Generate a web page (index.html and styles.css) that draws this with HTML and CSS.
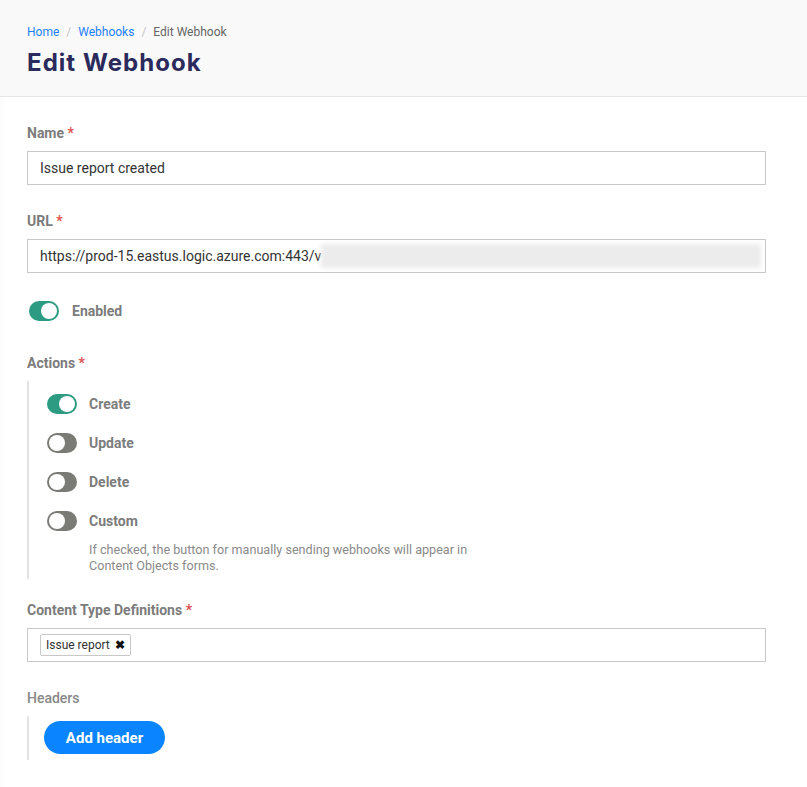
FILE: index.html
```html
<!DOCTYPE html>
<html>
<head>
<meta charset="utf-8">
<link rel="stylesheet" href="styles.css">
</head>
<body>
<header class="page-header">
  <nav class="breadcrumb">
    <a href="#">Home</a><span class="sep">/</span><a href="#">Webhooks</a><span class="sep">/</span><span class="current">Edit Webhook</span>
  </nav>
  <h1 class="title">Edit Webhook</h1>
</header>
<main class="content">
  <div class="form-group">
    <label class="label">Name <span class="req">*</span></label>
    <div class="field">Issue report created</div>
  </div>
  <div class="form-group">
    <label class="label">URL <span class="req">*</span></label>
    <div class="field url"><span>https://prod-15.eastus.logic.azure.com:443/v</span><span class="blurred"></span></div>
  </div>
  <div class="enabled-row">
    <span class="toggle on"></span><span class="toggle-label">Enabled</span>
  </div>
  <div class="form-group actions">
    <label class="label">Actions <span class="req">*</span></label>
    <div class="sub-group">
      <div class="toggle-row"><span class="toggle on"></span><span class="toggle-label">Create</span></div>
      <div class="toggle-row"><span class="toggle"></span><span class="toggle-label">Update</span></div>
      <div class="toggle-row"><span class="toggle"></span><span class="toggle-label">Delete</span></div>
      <div class="toggle-row"><span class="toggle"></span><span class="toggle-label">Custom</span></div>
      <p class="help">If checked, the button for manually sending webhooks will appear in<br>Content Objects forms.</p>
    </div>
  </div>
  <div class="form-group ctd">
    <label class="label">Content Type Definitions <span class="req">*</span></label>
    <div class="field tags"><span class="tag">Issue report <span class="x">✖</span></span></div>
  </div>
  <div class="form-group headers">
    <label class="label light">Headers</label>
    <div class="sub-group hdr">
      <button class="btn">Add header</button>
    </div>
  </div>
</main>
</body>
</html>
```

FILE: styles.css
```css
* { box-sizing: border-box; }
html, body { margin: 0; padding: 0; }
body {
  font-family: Roboto, "Liberation Sans", sans-serif;
  background: #fff;
  color: #333;
  min-height: 787px;
  box-shadow: inset 8px 0 8px -6px rgba(0,0,0,0.025);
}
.page-header {
  background: #f9f9f9;
  border-bottom: 1px solid #e6e6e6;
  height: 97px;
  padding: 24px 27px 0;
}
.breadcrumb {
  font-size: 12px;
  line-height: 16px;
  color: #666;
}
.breadcrumb a { color: #1e80ff; text-decoration: none; }
.breadcrumb .sep { color: #c4c4c4; margin: 0 7px; }
.breadcrumb .current { color: #666; }
.title {
  margin: 8px 0 0;
  font-family: Inter, "Liberation Sans", sans-serif;
  font-size: 24px;
  line-height: 30px;
  font-weight: 700;
  letter-spacing: 1.05px;
  color: #2b2a5c;
}
.content {
  padding: 28px 41px 0 27px;
}
.form-group { margin-bottom: 28px; }
.label {
  display: block;
  font-size: 14px;
  line-height: 16px;
  font-weight: 700;
  color: #7c7c7c;
  margin-bottom: 10px;
}
.label.light { font-weight: 500; color: #888; }
.req { color: #e0524f; }
.field {
  height: 34px;
  border: 1px solid #c8c8c8;
  padding: 0 12px;
  display: flex;
  align-items: center;
  font-size: 14px;
  color: #333;
}
.field.url { padding-right: 4px; }
.blurred {
  flex: 1;
  height: 24px;
  background: #ececec;
  filter: blur(2px);
}
.enabled-row {
  display: flex;
  align-items: center;
  padding-left: 2px;
  margin-top: 5px;
  margin-bottom: 34px;
}
.enabled-row .toggle-label { margin-left: 13px; }
.toggle {
  position: relative;
  display: inline-block;
  width: 30px;
  height: 20px;
  border-radius: 10px;
  background: #7b7b76;
  flex: none;
}
.toggle::after {
  content: "";
  position: absolute;
  top: 2px;
  left: 2px;
  width: 16px;
  height: 16px;
  border-radius: 50%;
  background: #fff;
}
.toggle.on { background: #2d9a82; }
.toggle.on::after { left: 12px; }
.toggle-label {
  margin-left: 12px;
  font-size: 14px;
  font-weight: 700;
  color: #7c7c7c;
}
.sub-group {
  border-left: 2px solid #e4e4e4;
  padding-left: 18px;
}
.actions { margin-bottom: 23px; }
.actions .label { margin-bottom: 10px; }
.actions .sub-group { padding-top: 13px; padding-bottom: 5px; }
.toggle-row {
  display: flex;
  align-items: center;
  height: 20px;
  margin-bottom: 19px;
}
.toggle-row:last-of-type { margin-bottom: 11px; }
.help {
  margin: 0 0 0 42px;
  font-size: 12.6px;
  line-height: 16px;
  color: #8a8a8a;
}
.ctd .label { margin-bottom: 10px; }
.ctd { margin-bottom: 28px; }
.tags { padding-left: 12px; }
.tag {
  display: inline-flex;
  align-items: center;
  height: 22px;
  border: 1px solid #c8c8c8;
  border-radius: 2px;
  padding: 0 5px;
  font-size: 12px;
  color: #333;
  background: #fff;
}
.tag .x {
  margin-left: 5px;
  font-size: 12px;
  color: #111;
  font-weight: 700;
}
.headers .label { margin-bottom: 10px; }
.hdr { padding: 5px 0 6px 15px; }
.btn {
  display: block;
  height: 33px;
  width: 121px;
  border: none;
  border-radius: 17px;
  background: #0a84ff;
  color: #fff;
  font-family: Roboto, "Liberation Sans", sans-serif;
  font-size: 15px;
  font-weight: 700;
  padding: 0;
  cursor: pointer;
}
```
